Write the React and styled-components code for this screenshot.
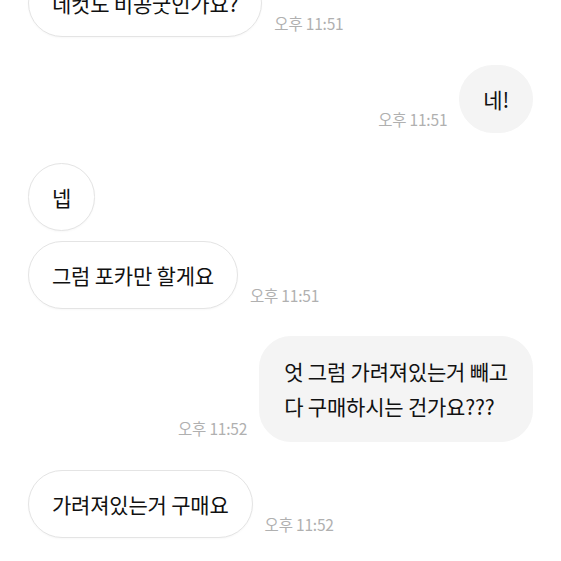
import React from "react";
import styled, { createGlobalStyle } from "styled-components";

const GlobalStyle = createGlobalStyle`
  html, body {
    margin: 0;
    padding: 0;
    background: #ffffff;
    overflow: hidden;
  }
  body {
    font-family: "Noto Sans CJK KR", "Noto Sans", sans-serif;
  }
`;

const Chat = styled.div`
  width: 561px;
  height: 561px;
  overflow: hidden;
  background: #ffffff;
  box-sizing: border-box;
  padding: 0 28px;
  display: flex;
  flex-direction: column;
`;

const Row = styled.div`
  display: flex;
  flex-direction: ${(p) => (p.$mine ? "row-reverse" : "row")};
  align-items: flex-end;
  gap: 12px;
  margin-top: ${(p) => p.$gap}px;
`;

const Bubble = styled.div`
  box-sizing: border-box;
  padding: ${(p) => (p.$multi ? "17px 24px 17px" : "15.5px 23px")};
  font-size: 21px;
  font-weight: 400;
  line-height: 35px;
  color: #111111;
  letter-spacing: -0.2px;
  white-space: nowrap;
  border-radius: ${(p) => (p.$multi ? 32 : 35)}px;
  background: ${(p) => (p.$mine ? "#f4f4f4" : "#ffffff")};
  border: 1px solid ${(p) => (p.$mine ? "#f4f4f4" : "#e4e4e4")};
  box-shadow: ${(p) => (p.$mine ? "none" : "0 1px 2px rgba(0,0,0,0.03)")};
`;

const Time = styled.span`
  font-size: 15.5px;
  line-height: 18px;
  color: #b0b0b0;
  margin-bottom: 5px;
  white-space: nowrap;
  letter-spacing: -0.2px;
`;

const messages = [
  { mine: false, gap: -31, lines: ["네컷도 비공굿인가요?"], time: "오후 11:51" },
  { mine: true, gap: 28, lines: ["네!"], time: "오후 11:51" },
  { mine: false, gap: 30, lines: ["넵"] },
  { mine: false, gap: 10, lines: ["그럼 포카만 할게요"], time: "오후 11:51" },
  {
    mine: true,
    gap: 27,
    lines: ["엇 그럼 가려져있는거 빼고", "다 구매하시는 건가요???"],
    time: "오후 11:52",
  },
  { mine: false, gap: 28, lines: ["가려져있는거 구매요"], time: "오후 11:52" },
];

export default function App() {
  return (
    <>
      <GlobalStyle />
      <Chat>
        {messages.map((m, i) => (
          <Row key={i} $mine={m.mine} $gap={m.gap}>
            <Bubble $mine={m.mine} $multi={m.lines.length > 1}>
              {m.lines.map((l, j) => (
                <div key={j}>{l}</div>
              ))}
            </Bubble>
            {m.time && <Time>{m.time}</Time>}
          </Row>
        ))}
      </Chat>
    </>
  );
}
